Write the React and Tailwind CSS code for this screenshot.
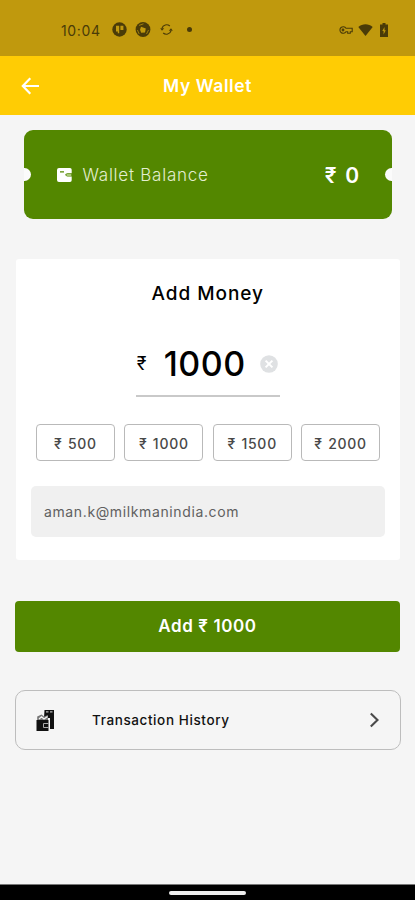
import React from "react";

function StatusBar() {
  return (
    <div className="h-14 shrink-0 bg-[#c0990d] text-[#4a3b08] flex items-center pl-[61px] pr-[27px] pt-[3px]">
      <span className="text-[14px] leading-5 w-[40px] tracking-[0.65px] whitespace-nowrap pt-0.5">10:04</span>
      <svg className="ml-[11px]" width="15" height="15" viewBox="0 0 15 15">
        <circle cx="7.5" cy="7.5" r="7.2" fill="currentColor" />
        <path d="M4 3.8h3.2v7.4H5.8V9.5H4zM8.4 3.8h3v4.1h-3z" fill="#c0990d" />
      </svg>
      <svg className="ml-2" width="16" height="15" viewBox="0 0 16 15">
        <circle cx="8" cy="7.5" r="7.4" fill="currentColor" />
        <path d="M6 4.8l4.8 1.6-.8 4-3.800.3-1.200-3z" fill="#c0990d" />
        <path d="M4 3.4L8.5 1.8M2.4 8l1.8 4M13.5 8l-2 4" stroke="#c0990d" strokeWidth="0.7" fill="none" />
      </svg>
      <svg className="ml-[9px]" width="13" height="13" viewBox="0 0 13 13" fill="none" stroke="currentColor" strokeWidth="1.2">
        <path d="M2 5.2A4.8 4.8 0 0 1 9.8 3M11 7.8A4.8 4.8 0 0 1 3.2 10" />
        <path d="M0.2 5.2h4L2 7.8zM12.8 7.8h-4L11 5.2z" fill="currentColor" stroke="none" />
      </svg>
      <span className="ml-[14px] size-[5px] rounded-full bg-[#4a3b08]" />
      <svg className="ml-auto" width="14" height="10" viewBox="0 0 14 10" fill="none" stroke="currentColor" strokeWidth="1.1">
        <path d="M7 3.2A3.3 3.3 0 1 0 7 6.8H8.7V8.3H11.3V6.8H13.2V3.2Z" />
        <circle cx="4" cy="5" r="0.9" />
      </svg>
      <svg className="ml-[5px]" width="15" height="12" viewBox="0 0 15 12">
        <path d="M0.3 2.9C4.4-.6 10.6-.6 14.7 2.9L7.5 12Z" fill="currentColor" />
      </svg>
      <svg className="ml-[7px]" width="8" height="14" viewBox="0 0 8 14">
        <path d="M2.5 0h3v1.5H8V14H0V1.5h2.5z" fill="currentColor" />
        <path d="M4.5 4L2.3 8h1.3v3.4L5.8 7.2H4.5z" fill="#c0990d" />
      </svg>
    </div>
  );
}

function Header() {
  return (
    <div className="h-[59px] shrink-0 bg-[#ffcc04] text-white flex items-center pl-[21px]">
      <svg width="19" height="18" viewBox="0 0 19 18" fill="none" stroke="white" strokeWidth="2.2">
        <path d="M9.3 1.2L1.8 9l7.5 7.8M1.8 9H18" />
      </svg>
      <h1 className="ml-[123px] pt-0.5 text-[17.5px] font-semibold tracking-[0.6px] whitespace-nowrap">My Wallet</h1>
    </div>
  );
}

function Balance() {
  return (
    <div className="relative mt-[15px] mx-[23.5px] h-[89px] shrink-0 rounded-[9px] bg-[#538700] text-white flex items-center pl-[33px] pr-8 overflow-hidden">
      <span className="absolute -left-[6px] top-[37.5px] size-[13px] rounded-full bg-[#fbfbfb]" />
      <span className="absolute -right-[6px] top-[37.5px] size-[13px] rounded-full bg-[#fbfbfb]" />
      <svg width="15" height="14" viewBox="0 0 15 14">
        <path d="M2 0h11q1.700 0 1.700 1.700V5.200H10.500q-2 0-2.300 1.600q.5 1.800 2.300 1.800h4.200v3.700Q14.700 14 13 14H2q-2 0-2-2V2q0-2 2-2z" fill="white" />
        <path d="M3 3.3h4v1.3H3z" fill="#538700" />
        <path d="M9.5 6h4.800v1.900H9.500z" fill="#a9c878" />
      </svg>
      <span className="ml-[11px] pt-0.5 text-[17px] font-light text-[#e3eed0] tracking-[0.75px] whitespace-nowrap">Wallet Balance</span>
      <span className="ml-auto pt-0.5 text-[21px] font-semibold tracking-[0.3px] [word-spacing:3px] whitespace-nowrap">₹ 0</span>
    </div>
  );
}

const amounts = ["500", "1000", "1500", "2000"];

function AddMoney() {
  return (
    <div className="mt-10 ml-4 mr-[15.5px] h-[301px] shrink-0 rounded-[3px] bg-white flex flex-col">
      <h2 className="mt-[21px] h-[26px] leading-[27px] text-center text-[19px] font-medium text-black tracking-[0.95px]">Add Money</h2>
      <div className="mt-[31px] mx-auto w-[144px] h-[60px] border-b-2 border-[#c9c9c9] flex items-center pb-[5px] text-black">
        <span className="text-[18px] w-[28px] pl-px">₹</span>
        <span className="text-[34px] leading-none font-medium w-[96px] tracking-[0.5px] whitespace-nowrap">1000</span>
        <svg width="18" height="18" viewBox="0 0 18 18">
          <circle cx="9" cy="9" r="8.8" fill="#dfe1e3" />
          <path d="M5.6 5.6l6.8 6.8M12.4 5.6l-6.8 6.8" stroke="white" strokeWidth="2" />
        </svg>
      </div>
      <div className="mt-[27px] ml-5 mr-[19.5px] grid grid-cols-4 gap-[9.5px]">
        {amounts.map((a) => (
          <div key={a} className="h-[37px] rounded-[4px] border border-[#b9b9b9] flex items-center justify-center pt-px text-[14px] font-medium text-[#484848] tracking-[0.75px] [word-spacing:1px] whitespace-nowrap">₹ {a}</div>
        ))}
      </div>
      <div className="mt-[25px] mx-[15px] h-[50.5px] rounded-[5px] bg-[#f0f0f0] flex items-center pl-[13px] text-[14px] text-[#606060] tracking-[0.62px]">aman.k@milkmanindia.com</div>
    </div>
  );
}

export default function App() {
  return (
    <div className="h-[900px] w-full bg-[#f5f5f5] flex flex-col overflow-hidden font-['Inter','Liberation_Sans',sans-serif]">
      <StatusBar />
      <Header />
      <Balance />
      <AddMoney />
      <div className="mt-[41px] mx-[15px] h-[50.5px] shrink-0 rounded-[4px] bg-[#538700] text-white flex items-center justify-center text-[17px] font-semibold tracking-[0.6px]">Add ₹ 1000</div>
      <div className="mt-[38.5px] ml-[15px] mr-[14px] h-[60px] shrink-0 rounded-[10px] border border-[#bdbdbd] flex items-center pl-[20px] pr-5">
        <svg width="19" height="21" viewBox="0 0 19 21">
          <path d="M8.500 0H18v19h-4V8H8z" fill="#111" />
          <path d="M10 1.800h2.500M14 1.800h2.500" stroke="#bbb" strokeWidth="1.200" />
          <path d="M1.200 6.500L5.500 4.500 8 6.500l4-1.500v5H1.200z" fill="#777" />
          <path d="M3 9L5.500 6.800 8 9l3.500-2.500" stroke="#f5f5f5" strokeWidth="1.300" fill="none" />
          <path d="M0.500 10h12v11H0.500z" fill="#111" />
          <path d="M12.500 13.500H7.500v4h5" stroke="#aaa" strokeWidth="1" fill="none" />
        </svg>
        <span className="ml-[37px] text-[13.5px] font-medium text-[#111] tracking-[0.6px] whitespace-nowrap">Transaction History</span>
        <svg className="ml-auto" width="11" height="16" viewBox="0 0 11 16" fill="none" stroke="#4a4a4a" strokeWidth="2.1">
          <path d="M1.8 1.5L8.5 8l-6.7 6.5" />
        </svg>
      </div>
      <div className="mt-auto h-4 shrink-0 bg-black border-t border-[#777] flex justify-center pt-[6px]">
        <span className="h-[4px] w-[77px] rounded-full bg-[#eeeeee]" />
      </div>
    </div>
  );
}
